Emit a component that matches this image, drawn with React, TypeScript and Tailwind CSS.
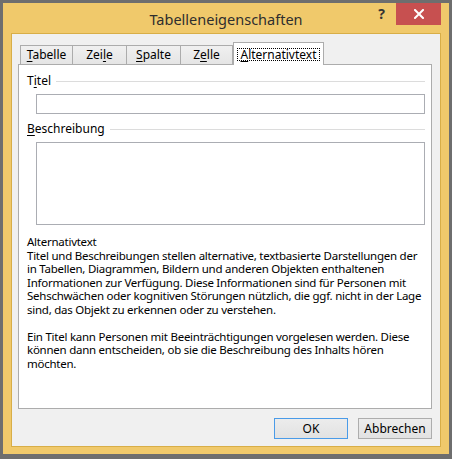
import React from 'react';

const font = { fontFamily: '"Noto Sans", "Open Sans", sans-serif' };

// Tab strip entries: label split around the underlined access key
const tabs = [
  { pre: '', key: 'T', post: 'abelle', w: 'w-[53px]' },
  { pre: 'Zei', key: 'l', post: 'e', w: 'w-[55px]' },
  { pre: '', key: 'S', post: 'palte', w: 'w-[55px]' },
  { pre: 'Z', key: 'e', post: 'lle', w: 'w-[53px]' },
];

function Tab({ pre, k, post, w }: { pre: string; k: string; post: string; w: string }) {
  return (
    <div
      className={`${w} -ml-px first:ml-0 h-[19px] mt-[3px] border border-b-0 border-[#acacac] bg-gradient-to-b from-[#f0f0f0] to-[#e5e5e5] flex items-center justify-center text-[12px] text-black`}
    >
      <span>
        {pre}
        <span className="underline underline-offset-2">{k}</span>
        {post}
      </span>
    </div>
  );
}

function SectionLabel({ pre, k, post }: { pre: string; k: string; post: string }) {
  return (
    <div className="flex items-center h-[14px] text-[12px] text-black">
      <span className="whitespace-nowrap">
        {pre}
        <span className="underline underline-offset-2">{k}</span>
        {post}
      </span>
      <div className="flex-1 h-px bg-[#dcdcdc] ml-[5px]" />
    </div>
  );
}

export default function App() {
  return (
    <div className="w-[452px] h-[459px] bg-[#6e6e6e] pt-[3px] pl-[3px] pr-[3px] pb-[5px]" style={font}>
      <div className="h-full bg-[#f0c96b] flex flex-col">
        {/* title bar */}
        <div className="h-[30px] flex items-start">
          <div className="w-[79px]" />
          <div className="flex-1 text-center text-[14.5px] text-[#2e2e2e] pt-[6px] leading-[20px]">
            Tabelleneigenschaften
          </div>
          <div className="w-[26px] h-[22px] flex items-center justify-center text-[14px] font-bold text-[#333] pb-[2px] pr-[3px]">
            ?
          </div>
          <div className="w-[45px] h-[22px] bg-[#c75050] flex items-center justify-center">
            <svg width="10" height="10" viewBox="0 0 10 10">
              <path d="M1 1 L9 9 M9 1 L1 9" stroke="white" strokeWidth="2" strokeLinecap="square" />
            </svg>
          </div>
          <div className="w-[8px]" />
        </div>

        {/* client area */}
        <div className="flex-1 mx-[8px] mb-[7px] border border-[#d8ae47] bg-[#f0f0f0] flex flex-col pt-[8px] pl-[6px] pr-[8px]">
          <div className="flex items-end pl-[2px] h-[22px]">
            {tabs.map((t) => (
              <Tab key={t.pre + t.key} pre={t.pre} k={t.key} post={t.post} w={t.w} />
            ))}
            <div className="relative z-10 -mb-px w-[91px] h-[23px] border border-b-0 border-[#acacac] bg-white flex items-center justify-center text-[12px] text-black">
              <span className="border border-dotted border-black px-[2px] leading-[11px] h-[13px] mt-[1px]">
                <span className="underline underline-offset-2">A</span>lternativtext
              </span>
            </div>
          </div>

          {/* panel */}
          <div className="h-[345px] border border-[#acacac] bg-white pl-[8px] pr-[6px] pt-[9px]">
            <SectionLabel pre="T" k="i" post="tel" />
            <div className="ml-[9px] mt-[6px] h-[20px] border border-[#abadb3] bg-white" />
            <div className="mt-[8px]">
              <SectionLabel pre="" k="B" post="eschreibung" />
            </div>
            <div className="ml-[9px] mt-[6px] h-[83px] border border-[#abadb3] bg-white" />
            <div className="mt-[10px] text-[11.5px] leading-[13.5px] text-black whitespace-nowrap tracking-[-0.25px]">
              Alternativtext
              <br />
              Titel und Beschreibungen stellen alternative, textbasierte Darstellungen der
              <br />
              in Tabellen, Diagrammen, Bildern und anderen Objekten enthaltenen
              <br />
              Informationen zur Verfügung. Diese Informationen sind für Personen mit
              <br />
              Sehschwächen oder kognitiven Störungen nützlich, die ggf. nicht in der Lage
              <br />
              sind, das Objekt zu erkennen oder zu verstehen.
              <br />
              <br />
              Ein Titel kann Personen mit Beeinträchtigungen vorgelesen werden. Diese
              <br />
              können dann entscheiden, ob sie die Beschreibung des Inhalts hören
              <br />
              möchten.
            </div>
          </div>

          {/* buttons */}
          <div className="flex justify-end gap-[10px] mt-[9px]">
            <button className="w-[74px] h-[21px] border border-[#4a9be8] bg-gradient-to-b from-[#ececec] to-[#e2e2e2] text-[12px] text-black leading-none">
              OK
            </button>
            <button className="w-[74px] h-[21px] border border-[#adadad] bg-gradient-to-b from-[#ececec] to-[#e2e2e2] text-[12px] text-black leading-none">
              Abbrechen
            </button>
          </div>
        </div>
      </div>
    </div>
  );
}
